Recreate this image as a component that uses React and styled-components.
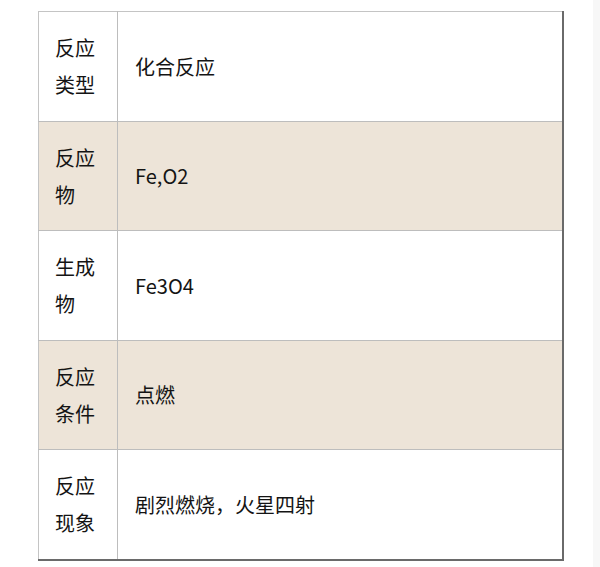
import React from "react";
import styled, { createGlobalStyle } from "styled-components";

const GlobalStyle = createGlobalStyle`
  html, body {
    margin: 0;
    padding: 0;
    background: #ffffff;
  }
`;

const Page = styled.div`
  display: flex;
  width: 600px;
  height: 567px;
  font-family: "Noto Sans CJK SC", "Noto Sans", sans-serif;
  color: #141414;
`;

const Content = styled.div`
  flex: 1;
  padding: 11px 0 0 38px;
`;

const Gutter = styled.div`
  width: 7px;
  background: #f7f7f7;
`;

const Table = styled.table`
  width: 526px;
  table-layout: fixed;
  border-collapse: collapse;
  border-top: 1px solid #c4c4c4;
  border-left: 1px solid #c4c4c4;
  border-right: 2px solid #6a6a6a;
  border-bottom: 2px solid #6a6a6a;
`;

const Row = styled.tr`
  background: ${(p) => (p.$shaded ? "#ede4d8" : "#ffffff")};

  &:last-child > td {
    border-bottom: none;
  }
`;

const LabelCell = styled.td`
  width: 79px;
  box-sizing: border-box;
  padding: 17.25px 0 17.25px 16px;
  font-size: 20px;
  line-height: 37px;
  vertical-align: middle;
  border-right: 1px solid #bdbdbd;
  border-bottom: 1px solid #bdbdbd;
`;

const ValueCell = styled.td`
  padding: 0 17px;
  font-size: 20px;
  line-height: 37px;
  vertical-align: middle;
  border-bottom: 1px solid #bdbdbd;
`;

const Line = styled.div`
  white-space: nowrap;
`;

const rows = [
  { label: ["反应", "类型"], value: "化合反应" },
  { label: ["反应", "物"], value: "Fe,O2", shaded: true },
  { label: ["生成", "物"], value: "Fe3O4" },
  { label: ["反应", "条件"], value: "点燃", shaded: true },
  { label: ["反应", "现象"], value: "剧烈燃烧，火星四射" },
];

export default function App() {
  return (
    <>
      <GlobalStyle />
      <Page>
        <Content>
          <Table>
            <tbody>
              {rows.map((r, i) => (
                <Row key={i} $shaded={r.shaded}>
                  <LabelCell>
                    {r.label.map((l) => (
                      <Line key={l}>{l}</Line>
                    ))}
                  </LabelCell>
                  <ValueCell>{r.value}</ValueCell>
                </Row>
              ))}
            </tbody>
          </Table>
        </Content>
        <Gutter />
      </Page>
    </>
  );
}
